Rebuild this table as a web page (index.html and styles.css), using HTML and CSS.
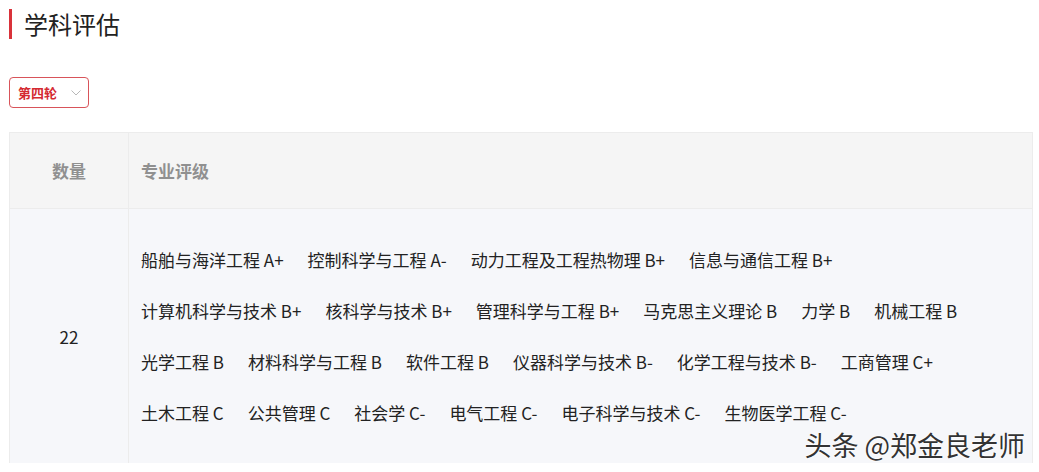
FILE: index.html
```html
<!DOCTYPE html>
<html lang="zh-CN">
<head>
    <meta charset="UTF-8">
    <meta name="viewport" content="width=device-width, initial-scale=1.0">
    <title>学科评估</title>
    <link rel="stylesheet" href="styles.css">
</head>
<body>
    <div class="page">
        <div class="title">
            <span class="bar"></span>
            <h2>学科评估</h2>
        </div>
        <div class="select">
            <span>第四轮</span>
            <svg class="arrow" width="10" height="6" viewBox="0 0 10 6"><path d="M0.5 0.5 L5 5 L9.5 0.5" fill="none" stroke="#b8b8b8" stroke-width="1"/></svg>
        </div>
        <div class="table">
            <div class="head">
                <div class="col-num">数量</div>
                <div class="col-list">专业评级</div>
            </div>
            <div class="body">
                <div class="col-num">22</div>
                <div class="col-list">
                    <div class="line">
                        <span>船舶与海洋工程 A+</span>
                        <span>控制科学与工程 A-</span>
                        <span>动力工程及工程热物理 B+</span>
                        <span>信息与通信工程 B+</span>
                    </div>
                    <div class="line">
                        <span>计算机科学与技术 B+</span>
                        <span>核科学与技术 B+</span>
                        <span>管理科学与工程 B+</span>
                        <span>马克思主义理论 B</span>
                        <span>力学 B</span>
                        <span>机械工程 B</span>
                    </div>
                    <div class="line">
                        <span>光学工程 B</span>
                        <span>材料科学与工程 B</span>
                        <span>软件工程 B</span>
                        <span>仪器科学与技术 B-</span>
                        <span>化学工程与技术 B-</span>
                        <span>工商管理 C+</span>
                    </div>
                    <div class="line">
                        <span>土木工程 C</span>
                        <span>公共管理 C</span>
                        <span>社会学 C-</span>
                        <span>电气工程 C-</span>
                        <span>电子科学与技术 C-</span>
                        <span>生物医学工程 C-</span>
                    </div>
                </div>
            </div>
        </div>
        <div class="mark">头条 @郑金良老师</div>
    </div>
</body>
</html>
```

FILE: styles.css
```css
body {
    margin: 0;
    background: #fff;
    font-family: "Microsoft YaHei", "Noto Sans CJK SC", "Noto Sans", sans-serif;
    color: #333;
}
.page {
    position: relative;
    width: 1039px;
    height: 472px;
    padding: 9px 8px 0 9px;
    box-sizing: border-box;
    overflow: hidden;
}
.title {
    display: flex;
    align-items: center;
    height: 30px;
}
.title .bar {
    width: 3px;
    height: 30px;
    background: #d9323a;
}
.title h2 {
    margin: 0 0 0 12px;
    font-size: 24px;
    font-weight: normal;
    color: #222;
    line-height: 30px;
}
.select {
    margin-top: 38px;
    width: 80px;
    height: 31px;
    box-sizing: border-box;
    border: 1px solid #d8545a;
    border-radius: 4px;
    display: flex;
    align-items: center;
    justify-content: space-between;
    padding: 0 7px 0 8px;
}
.select span {
    font-size: 13px;
    color: #d42a31;
    font-weight: bold;
}
.table {
    margin-top: 24px;
    width: 1022px;
    border-top: 1px solid #ececec;
    border-left: 1px solid #ececec;
    border-right: 1px solid #ececec;
}
.head, .body {
    display: flex;
}
.head {
    height: 75px;
    background: #f5f5f5;
    border-bottom: 1px solid #ececec;
    font-size: 17px;
    font-weight: bold;
    color: #909090;
}
.head .col-num, .head .col-list {
    display: flex;
    align-items: center;
}
.col-num {
    width: 118px;
    border-right: 1px solid #ececec;
    justify-content: center;
    flex-shrink: 0;
}
.col-list {
    padding-left: 12px;
}
.body {
    background: #f6f7fa;
    font-size: 17px;
    color: #222;
}
.body .col-num {
    display: flex;
    align-items: center;
}
.body .col-list {
    padding-top: 25px;
    padding-bottom: 25px;
}
.line {
    display: flex;
    gap: 24px;
    line-height: 51px;
    white-space: nowrap;
}
.mark {
    position: absolute;
    right: 14px;
    bottom: 8px;
    font-size: 27px;
    color: #333;
    text-shadow: 0 0 2px #fff, 0 0 2px #fff, 0 0 2px #fff;
}
```
